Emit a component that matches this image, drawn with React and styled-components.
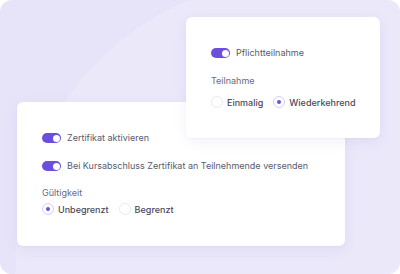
import React from 'react';
import styled, { createGlobalStyle } from 'styled-components';

const GlobalStyle = createGlobalStyle`
    html, body {
        margin: 0;
        padding: 0;
        background: #ffffff;
    }
    body {
        font-family: Inter, "Noto Sans", "Liberation Sans", sans-serif;
        -webkit-font-smoothing: antialiased;
    }
`

const Stage = styled.div`
    display: grid;
    width: 400px;
    height: 274px;
    border-radius: 12px;
    overflow: hidden;
    background:
        radial-gradient(circle at 300px 262px, #EBE8FA 0, #EBE8FA 284px, rgba(0,0,0,0) 285px),
        #E7E4F9;
`
const Card = styled.div`
    grid-area: 1 / 1;
    align-self: start;
    justify-self: start;
    box-sizing: border-box;
    display: flex;
    flex-direction: column;
    width: ${p => p.$w}px;
    height: ${p => p.$h}px;
    margin: ${p => p.$top}px 0 0 ${p => p.$left}px;
    padding: 31px 25px 0 25px;
    background: #ffffff;
    border-radius: 6px;
    box-shadow: 0 4px 14px rgba(90, 70, 180, 0.07), 0 1px 2px rgba(90, 70, 180, 0.04);
`
const ToggleRow = styled.div`
    display: flex;
    align-items: center;
    gap: 6px;
    height: 10px;
    margin-bottom: ${p => p.$mb}px;
`
const Toggle = styled.span`
    position: relative;
    flex: none;
    width: 19px;
    height: 10px;
    border-radius: 5px;
    background: #6B4EDB;
    &::after {
        content: '';
        position: absolute;
        top: 1.5px;
        right: 1.5px;
        width: 7px;
        height: 7px;
        border-radius: 50%;
        background: #ffffff;
    }
`
const ToggleLabel = styled.span`
    font-size: 9px;
    line-height: 10px;
    color: #5a5a6c;
    white-space: nowrap;
`
const GroupLabel = styled.div`
    font-size: 9px;
    line-height: 10px;
    height: 10px;
    color: #6a6a7c;
    margin-bottom: ${p => p.$mb}px;
`
const RadioGroup = styled.div`
    display: flex;
    align-items: center;
    gap: 10px;
    height: 12px;
`
const RadioOption = styled.label`
    display: flex;
    align-items: center;
    gap: 4px;
    font-size: 9px;
    font-weight: 500;
    color: #4a4a5a;
    white-space: nowrap;
`
const RadioDot = styled.span`
    flex: none;
    box-sizing: border-box;
    width: 12px;
    height: 12px;
    border-radius: 50%;
    border: 1px solid ${p => (p.$on ? '#D6CDF6' : '#EAEAF0')};
    background: #ffffff;
    display: flex;
    align-items: center;
    justify-content: center;
    &::after {
        content: '';
        width: 4px;
        height: 4px;
        border-radius: 50%;
        background: ${p => (p.$on ? '#6B4EDB' : 'transparent')};
    }
`

const Radio = ({ on, children }) => (
    <RadioOption>
        <RadioDot $on={on} />
        {children}
    </RadioOption>
)

export default function App() {
    return (
        <>
            <GlobalStyle />
            <Stage>
                <Card $left={17} $top={102} $w={328} $h={144}>
                    <ToggleRow $mb={18}>
                        <Toggle />
                        <ToggleLabel>Zertifikat aktivieren</ToggleLabel>
                    </ToggleRow>
                    <ToggleRow $mb={17}>
                        <Toggle />
                        <ToggleLabel>Bei Kursabschluss Zertifikat an Teilnehmende versenden</ToggleLabel>
                    </ToggleRow>
                    <GroupLabel $mb={5}>Gültigkeit</GroupLabel>
                    <RadioGroup>
                        <Radio on>Unbegrenzt</Radio>
                        <Radio>Begrenzt</Radio>
                    </RadioGroup>
                </Card>
                <Card $left={186} $top={17} $w={194} $h={121}>
                    <ToggleRow $mb={18}>
                        <Toggle />
                        <ToggleLabel>Pflichtteilnahme</ToggleLabel>
                    </ToggleRow>
                    <GroupLabel $mb={10}>Teilnahme</GroupLabel>
                    <RadioGroup>
                        <Radio>Einmalig</Radio>
                        <Radio on>Wiederkehrend</Radio>
                    </RadioGroup>
                </Card>
            </Stage>
        </>
    );
}
